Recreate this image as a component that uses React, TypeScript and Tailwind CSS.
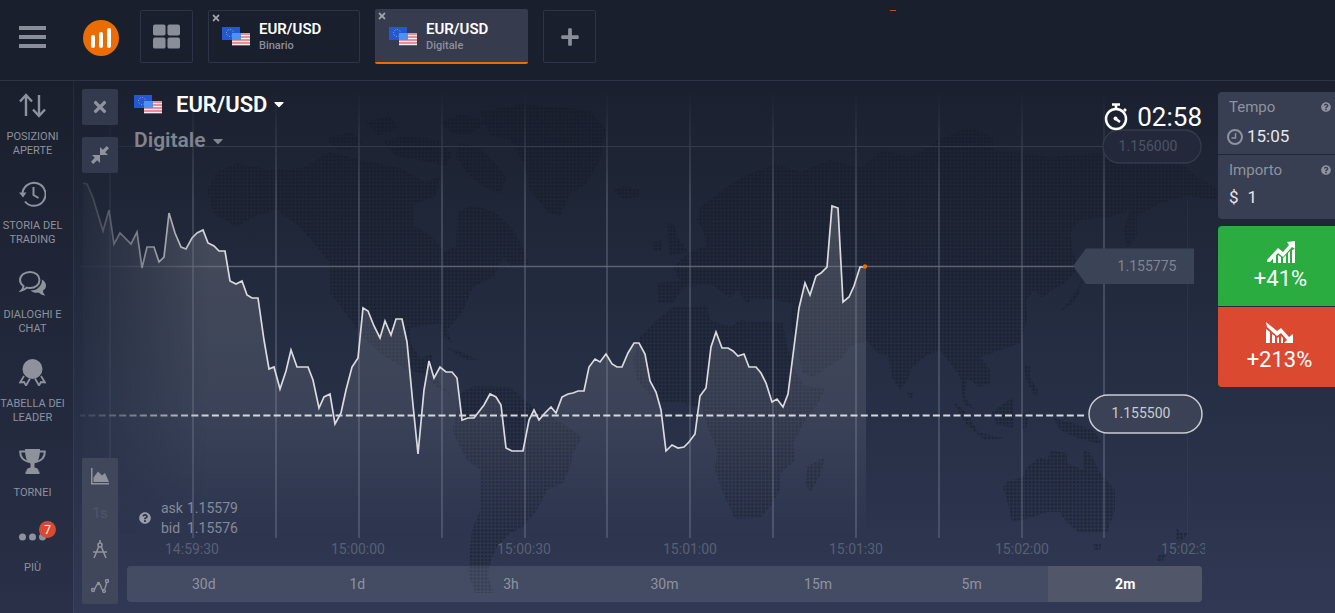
import type { ReactNode } from 'react'
import { FaCaretDown, FaPlus, FaQuestionCircle, FaTimes } from 'react-icons/fa'

const times = ['14:59:30', '15:00:00', '15:00:30', '15:01:00', '15:01:30', '15:02:00', '15:02:30']

const ranges = ['30d', '1d', '3h', '30m', '15m', '5m', '2m']

const gridLines = [109, 192, 275, 358, 441, 524, 606, 689, 772, 855, 938, 1021, 1103]

const price =
  '83,183 87,184 93,198 103,231 109,210 114,244 120,233 131,244 137,232 142,268 147,247 154,247 159,262 164,257 169,213 175,233 181,247 186,249 192,238 197,233 203,230 208,243 214,246 219,251 225,251 230,281 236,284 242,281 247,295 252,298 258,298 264,340 269,369 274,367 280,389 286,371 291,350 297,367 308,367 313,380 319,408 324,397 330,394 335,424 341,413 346,390 352,367 358,358 363,308 368,311 374,326 380,338 385,321 391,335 396,319 402,319 407,342 413,405 418,454 424,390 429,361 434,378 440,367 446,372 452,372 457,378 462,420 468,418 474,418 484,405 490,394 496,397 501,405 506,448 512,451 523,451 529,420 534,410 539,420 545,413 551,407 556,413 562,397 568,394 573,393 578,391 584,391 589,367 595,359 600,362 606,354 612,364 617,367 622,367 628,353 634,343 639,343 645,354 650,381 656,392 661,410 666,451 672,445 678,448 684,447 689,442 695,434 700,396 706,388 711,347 716,332 722,348 728,348 733,351 738,356 744,354 749,367 756,367 761,373 766,383 772,402 777,399 783,407 788,394 799,308 805,283 810,295 816,276 821,273 827,267 832,206 838,208 843,302 849,297 854,286 860,267 865,267'

// Land outlines for the dotted map, one polygon each
const land = [
  // North America
  '207,190 217,172 237,163 270,170 303,168 330,152 360,160 400,168 425,182 440,176 436,196 413,205 414,226 432,236 445,252 456,246 458,212 470,206 484,208 497,214 510,226 522,245 528,264 512,266 503,258 493,277 473,287 462,313 447,330 452,343 443,336 440,323 410,328 410,342 420,358 432,354 432,366 440,384 450,394 440,390 423,374 403,368 380,353 363,337 353,323 330,293 330,263 317,247 300,227 277,210 257,215 237,227 213,213',
  // Arctic islands
  '328,138 350,132 362,142 350,150 334,148',
  '366,122 390,116 398,128 378,136',
  '382,140 410,136 440,140 452,154 446,166 420,160 396,156',
  '440,122 462,114 488,122 470,134 452,134',
  '458,142 480,148 494,162 506,178 500,194 482,186 466,172 456,156',
  // Greenland
  '480,112 520,104 590,110 606,130 600,160 586,184 570,194 560,216 548,212 530,190 525,165 510,140 490,135',
  '613,190 624,186 640,190 638,197 622,199',
  // Caribbean
  '446,347 466,354 478,360 466,360',
  // South America
  '457,396 473,386 510,387 533,407 557,420 582,437 573,453 570,467 563,483 547,490 537,510 523,527 510,533 497,547 490,563 488,576 494,593 475,593 468,573 472,530 480,510 480,470 467,460 453,433 453,427 457,410',
  // British Isles
  '667,223 674,224 678,238 688,252 670,256 668,240',
  '653,242 662,240 662,250 653,252',
  // Africa
  '657,320 673,307 707,305 710,320 730,327 740,320 783,323 787,346 795,370 804,386 825,388 818,404 807,417 793,443 795,461 780,473 780,490 770,507 760,518 735,519 723,493 715,470 717,450 707,425 702,408 680,402 657,402 637,380 633,360 640,337',
  '825,457 820,476 810,493 805,482 808,466',
  // Europe and Asia
  '658,303 657,283 680,281 673,267 690,252 706,246 704,232 697,220 700,207 727,187 745,176 775,164 800,172 830,160 862,168 870,160 883,150 910,157 930,147 937,140 970,127 993,137 993,150 1053,157 1100,153 1177,160 1197,177 1222,191 1216,200 1187,196 1160,203 1137,216 1137,235 1127,250 1123,230 1130,210 1110,217 1080,220 1070,233 1074,256 1078,268 1064,284 1052,290 1042,298 1034,290 1026,300 1027,320 1020,343 980,357 990,370 990,383 980,387 967,378 965,398 975,410 964,404 960,377 950,363 940,350 927,355 912,367 908,380 900,390 892,377 888,355 878,353 867,341 850,346 842,358 813,377 803,373 795,340 790,324 793,304 776,300 753,298 747,304 738,290 729,298 712,284 683,287 673,303',
  '1083,276 1080,292 1072,304 1060,312 1068,302 1078,288',
  // South-east Asia
  '952,400 966,412 978,432 1004,438 984,440 966,424',
  '992,412 1013,397 1014,428 997,425',
  '1024,364 1030,366 1030,378 1038,390 1036,398 1026,380',
  '1022,414 1030,412 1026,428 1022,430',
  '1053,418 1073,423 1093,430 1103,445 1077,438 1060,430',
  '908,392 914,394 912,398 908,397',
  // Australia, Tasmania and New Zealand
  '1003,487 1007,500 1012,522 1030,518 1047,512 1060,512 1067,523 1080,533 1107,532 1115,510 1115,490 1103,477 1097,467 1090,453 1083,450 1083,470 1067,463 1067,453 1050,450 1048,460 1040,457 1027,467 1023,477 1007,482',
  '1093,543 1101,543 1100,550 1094,550',
  '1176,526 1180,533 1189,533 1181,541 1176,540',
  '1156,560 1160,554 1168,553 1162,562',
]

function Flags({ className }: { className: string }) {
  return (
    <svg viewBox="0 0 28 19" className={className} aria-hidden="true">
      <rect width="18" height="13" fill="#2457d6" />
      <circle cx="8" cy="6" r="3.5" fill="none" stroke="#c9b45c" strokeWidth="1" strokeDasharray="1 1.7" />
      <rect x="10" y="6" width="18" height="13" fill="#f4eef2" />
      <path d="M10 7h18M10 10h18M10 13h18M10 16h18M10 18.5h18" stroke="#d6304a" strokeWidth="1.2" />
      <rect x="10" y="6" width="9" height="7" fill="#4c93f0" />
    </svg>
  )
}

function ChartIcon({ down }: { down?: boolean }) {
  return down ? (
    <svg viewBox="0 0 28 22" className="h-[22px] w-7" fill="currentColor" aria-hidden="true">
      <path d="M0 0l11 9 4-3 8 9 4-3v9h-9l3-3-6-7-4 3L1 5z" />
      <path d="M0 7l4 3v11H0zM6 12l3 2v7H6zM11 16l2-1v6h-2zM15 14l2 2v5h-2z" />
    </svg>
  ) : (
    <svg viewBox="0 0 28 22" className="h-[22px] w-7" fill="currentColor" aria-hidden="true">
      <path d="M0 19L11 7l5 4 6-7-2-3 8-1v8l-3-2-9 10-5-4-8 9H0z" />
      <path d="M6 17l3-3v8H6zM11 14l3 2v6h-3zM16 17l3-3v8h-3zM21 12l2-2v12h-2zM25 9l3-1v14h-3z" />
    </svg>
  )
}

function Hamburger() {
  return (
    <button aria-label="Menu" className="mt-[17px] flex w-[27px] flex-col gap-[5px]">
      <span className="h-1 bg-[#8a8e99]" />
      <span className="h-1 bg-[#8a8e99]" />
      <span className="h-1 bg-[#8a8e99]" />
    </button>
  )
}

function AssetTab({ kind, active }: { kind: string; active?: boolean }) {
  return (
    <button
      className={
        active
          ? 'relative flex h-[55px] w-[153px] rounded-xs border-b-2 border-[#ec6c04] bg-[#363b4e] pt-[18px] pl-3.5 text-left'
          : 'relative mt-px flex h-[53px] w-[152px] rounded-xs border border-[#2e3447] pt-4 pl-[13px] text-left'
      }
    >
      <FaTimes className="absolute top-0.5 left-0.5 size-2.5 text-[#a2a5ad]" />
      <Flags className="h-[19px] w-7" />
      <span className="-mt-2 ml-[9px]">
        <span className="block text-[15px] leading-5 font-semibold text-white">EUR/USD</span>
        <span className="block text-[11px] leading-[13px] font-medium text-[#8b8f9b]">{kind}</span>
      </span>
    </button>
  )
}

function NavItem({ label, children }: { label: string; children: ReactNode }) {
  return (
    <a href="#" className="flex flex-col items-center gap-[11px]">
      <span className="relative flex size-[27px] items-center justify-center">{children}</span>
      <span className="text-center text-[11px] leading-3.5 whitespace-pre uppercase">{label}</span>
    </a>
  )
}

function Sidebar() {
  return (
    <nav className="flex w-[73px] shrink-0 flex-col bg-[#191f2c]/30 pt-[11px] pr-2 text-[#8d929d]">
      <div className="flex flex-col items-center gap-[23px]">
        <NavItem label={'Posizioni\naperte'}>
          <svg viewBox="0 0 27 27" className="size-[27px]" fill="none" stroke="currentColor" strokeWidth="2.4">
            <path d="M7 24V4M1 9.5L7 3l6 6.5M20 3v20M14 17.500l6 6.500 6-6.500" />
          </svg>
        </NavItem>
        <NavItem label={'Storia del\ntrading'}>
          <svg viewBox="0 0 27 27" className="size-[27px]" fill="none" stroke="currentColor" strokeWidth="2">
            <path d="M3.500 13.500a11.500 11.500 0 1 1 2.500 7" />
            <path d="M14.500 6v8l5 3" />
            <path d="M0 11.500h7.500L4 16.500z" fill="currentColor" stroke="none" />
          </svg>
        </NavItem>
        <NavItem label={'Dialoghi e\nchat'}>
          <svg viewBox="0 0 27 27" className="size-[27px]" fill="none" stroke="currentColor" strokeWidth="2">
            <path d="M11 2c5.500 0 9.500 3.500 9.500 8s-4 8-9.500 8c-1 0-2-.1-3-.4C6.500 19 5 20 2.500 20.500 4 19 4.500 17.500 4.500 16 2.500 14.500 1 12.500 1 10c0-4.500 4.500-8 10-8z" />
            <path
              d="M23 9.500c2.500 1.500 4 3.500 4 6 0 2-1 4-3 5 0 2 .5 3.500 2.500 5-3 0-5-1.500-6.500-2.800-3.500.5-6.500-.3-8.500-2.200 6.500.3 11.500-4.500 11.500-11z"
              fill="currentColor"
              stroke="none"
            />
          </svg>
        </NavItem>
        <NavItem label={'Tabella dei\nleader'}>
          <svg viewBox="0 0 27 27" className="size-[27px]" fill="none" stroke="currentColor" strokeWidth="1.800">
            <circle cx="13.500" cy="10" r="10" fill="currentColor" stroke="none" />
            <path d="M5 17l-4 6.500 4-.5 2 3.500 4-7M22 17l4 6.500-4-.5-2 3.500-4-7" />
          </svg>
        </NavItem>
        <NavItem label="Tornei">
          <svg viewBox="0 0 27 27" className="size-[27px]" fill="currentColor">
            <path d="M6 1h15c0 8-1.500 12.500-5.500 14.500v4c3 .5 4 1.500 4 3v1h1V26h-14v-2.500h1v-1c0-1.500 1-2.500 4-3v-4C7.500 13.500 6 9 6 1z" />
            <path d="M7 3.500H1.200C1 9 4 12.500 10 14M20 3.500h5.800C26 9 23 12.500 17 14" fill="none" stroke="currentColor" strokeWidth="2" />
          </svg>
        </NavItem>
        <NavItem label="Più">
          <svg viewBox="0 0 27 8" className="h-2 w-[27px]" fill="currentColor">
            <circle cx="3.500" cy="4" r="3.500" />
            <circle cx="13.500" cy="4" r="3.500" />
            <circle cx="23.500" cy="4" r="3.500" />
          </svg>
          <span className="absolute -top-0.5 left-5 flex size-[17px] items-center justify-center rounded-full bg-[#db4931] text-xs leading-none text-white">
            7
          </span>
        </NavItem>
      </div>
    </nav>
  )
}

function PriceChart() {
  return (
    <svg
      viewBox="74 81 1144 532"
      preserveAspectRatio="xMidYMid slice"
      className="absolute inset-0 size-full"
      fontSize="14"
      aria-label="EUR/USD price"
    >
      <defs>
        <pattern id="dots" width="3.7" height="3.7" patternUnits="userSpaceOnUse">
          <rect width="2.600" height="2.600" rx="0.6" fill="#131824" />
        </pattern>
        <linearGradient id="grid" gradientUnits="userSpaceOnUse" x1="0" y1="90" x2="0" y2="200">
          <stop offset="0" stopColor="#8f96a8" stopOpacity="0" />
          <stop offset="1" stopColor="#8f96a8" stopOpacity="0.3" />
        </linearGradient>
        <linearGradient id="area" gradientUnits="userSpaceOnUse" x1="0" y1="206" x2="0" y2="538">
          <stop offset="0" stopColor="#b4b9be" stopOpacity="0.26" />
          <stop offset="0.6" stopColor="#a4a8b4" stopOpacity="0.17" />
          <stop offset="1" stopColor="#9aa0b4" stopOpacity="0" />
        </linearGradient>
        <linearGradient id="fade" gradientUnits="userSpaceOnUse" x1="80" y1="0" x2="210" y2="0">
          <stop offset="0" stopColor="#fff" stopOpacity="0.1" />
          <stop offset="1" stopColor="#fff" />
        </linearGradient>
        <mask id="left" maskUnits="userSpaceOnUse" x="73" y="81" width="1144" height="532">
          <rect x="80" y="81" width="1137" height="532" fill="url(#fade)" />
        </mask>
        <clipPath id="plot">
          <rect x="73" y="81" width="1132" height="532" />
        </clipPath>
      </defs>

      <g fill="url(#dots)" opacity="0.5">
        {land.map((points) => (
          <polygon key={points} points={points} />
        ))}
      </g>

      <g mask="url(#left)">
        <polygon points={`83,538 ${price} 866,267 866,538`} fill="url(#area)" />
        {gridLines.map((x) => (
          <rect key={x} x={x} y="90" width="2" height="448" fill="url(#grid)" />
        ))}
        <path d="M1187.500 200V538" stroke="#8f96a8" strokeOpacity="0.07" />
        <path d="M80 146.500H1103" stroke="#343b50" />
        <path d="M80 266.500H1074" stroke="#6b7180" strokeOpacity="0.8" strokeWidth="1.500" />
        <path d="M78 415.500H1086" stroke="#d5d7db" strokeWidth="2" strokeDasharray="7 3.300" />
        <polyline points={price} fill="none" stroke="#d9dbdf" strokeWidth="1.700" />
      </g>
      <circle cx="865" cy="266.500" r="2.200" fill="#ec6c04" />

      <rect x="1103" y="130" width="98" height="33" rx="16.500" fill="#23293b" stroke="#353b4d" strokeWidth="1.300" />
      <text x="1148" y="151" textAnchor="middle" fill="#4d5365">
        1.156000
      </text>
      <path d="M1073 266l13-17.500h108v35.500h-108z" fill="#3b4356" />
      <text x="1147" y="271" textAnchor="middle" fill="#80858f">
        1.155775
      </text>
      <rect x="1089" y="395" width="113" height="38" rx="19" fill="#3b4255" stroke="#c9ccd2" strokeWidth="1.500" />
      <text x="1141" y="418" textAnchor="middle" fill="#c9ccd2">
        1.155500
      </text>

      <g clipPath="url(#plot)" fill="#586073" textAnchor="middle">
        {times.map((t, i) => (
          <text key={t} x={192 + i * 166} y="554">
            {t}
          </text>
        ))}
      </g>
    </svg>
  )
}

function ChartTools() {
  return (
    <div className="flex w-9 flex-col text-[#8f939e]">
      <button aria-label="Chiudi" className="flex size-9 items-center justify-center rounded-xs bg-[#343a4d]">
        <FaTimes className="size-[18px]" />
      </button>
      <button aria-label="Riduci" className="mt-3 flex size-9 items-center justify-center rounded-xs bg-[#343a4d]">
        <svg viewBox="0 0 18 18" className="size-[18px]" fill="currentColor">
          <path d="M9 1v8h8l-2.800-2.800L18 2.200 15.800 0l-4 3.800zM9 17V9H1l2.800 2.800L0 15.800 2.200 18l4-3.800z" />
        </svg>
      </button>
      <div className="mt-auto grid h-[146px] grid-rows-4 rounded-xs bg-[#41475b]">
        <button aria-label="Tipo di grafico" className="flex items-center justify-center">
          <svg viewBox="0 0 18 17" className="h-[17px] w-[18px]" fill="currentColor">
            <path d="M0 0h1.500v15H18v1.500H0z" />
            <path d="M2.500 14V9.500L7 3.500l4 4 3-2.500 4 9z" />
          </svg>
        </button>
        <button className="text-sm text-[#50566a]">1s</button>
        <button aria-label="Strumenti" className="flex items-center justify-center">
          <svg viewBox="0 0 16 20" className="h-5 w-4" fill="none" stroke="currentColor" strokeWidth="1.600">
            <path d="M8 1v3M7 7L2 19M9 7l5 12M1 13h14" />
            <circle cx="8" cy="6" r="2" />
          </svg>
        </button>
        <button aria-label="Indicatori" className="flex items-center justify-center">
          <svg viewBox="0 0 18 14" className="h-3.5 w-[18px]" fill="none" stroke="currentColor" strokeWidth="1.400">
            <path d="M3.500 10.500C5 8 5 5.500 7.500 4.500c2 .5 2.500 2.500 3 5 .5 1 1 1.500 2 1.500 2-1 2.500-4 3-7.500" />
            <circle cx="2" cy="11" r="1.500" />
            <circle cx="7.500" cy="4.500" r="1" fill="currentColor" />
            <circle cx="13" cy="12" r="1.400" />
            <circle cx="16" cy="2" r="1.500" />
          </svg>
        </button>
      </div>
    </div>
  )
}

function Quotes() {
  return (
    <div className="mt-auto ml-3 flex items-center gap-2.5 text-sm leading-5 text-[#858a97]">
      <FaQuestionCircle className="size-3 text-[#9a9eaa]" />
      <dl className="grid grid-cols-[26px_auto]">
        <dt>ask</dt>
        <dd>1.15579</dd>
        <dt>bid</dt>
        <dd>1.15576</dd>
      </dl>
    </div>
  )
}

function Chart() {
  return (
    <section className="relative flex min-w-0 flex-1 border-l border-white/5">
      <PriceChart />
      <div className="relative flex flex-1 gap-[9px] pt-2 pr-4 pb-[9px] pl-2">
        <ChartTools />
        <div className="flex min-w-0 flex-1 flex-col">
          <div className="flex items-start justify-between pl-[7px]">
            <div>
              <button className="flex h-[30px] items-center text-[22px] font-semibold text-white">
                <Flags className="mr-3.5 h-[19px] w-7" />
                EUR/USD
                <FaCaretDown className="ml-1 size-4" />
              </button>
              <button className="mt-[7px] flex h-[30px] items-center text-[21px] font-semibold text-[#80848f]">
                Digitale
                <FaCaretDown className="ml-1 size-4" />
              </button>
            </div>
            <div className="mt-2.5 flex items-center gap-2 text-[26px] leading-9 text-white">
              <svg viewBox="0 0 25 28" className="h-7 w-[25px]" fill="none" stroke="currentColor" strokeWidth="2.500">
                <circle cx="12" cy="16" r="10" />
                <path d="M8 1.500h8M12 1v5M20 6l2 2M12 16l4 3" strokeWidth="2.600" />
                <circle cx="11.500" cy="15.500" r="2" fill="currentColor" stroke="none" />
              </svg>
              02:58
            </div>
          </div>
          <Quotes />
          <div className="mt-7 mb-0.5 grid h-9 grid-cols-7 overflow-hidden rounded-sm bg-[#9ba0b0]/20 text-sm text-[#8f939f]">
            {ranges.map((r) => (
              <button key={r} className={r === '2m' ? 'bg-[#515669] font-bold text-white' : ''}>
                {r}
              </button>
            ))}
          </div>
        </div>
      </div>
    </section>
  )
}

function OrderPanel() {
  return (
    <aside className="w-[117px] shrink-0 pt-[11px] text-[#8f939e]">
      <div className="overflow-hidden rounded-l-sm bg-[#383f52]">
        <div className="h-[63px] border-b border-[#202638] pt-[5px] pl-[11px]">
          <div className="flex h-5 items-center justify-between pr-1 text-[15px]">
            Tempo
            <FaQuestionCircle className="size-2.5" />
          </div>
          <button className="mt-2 flex h-6 items-center gap-1 text-[17px] text-[#e6e7ea]">
            <svg viewBox="0 0 16 16" className="-ml-0.5 size-4 text-[#8f939e]" fill="none" stroke="currentColor" strokeWidth="2">
              <circle cx="8" cy="8" r="7" />
              <path d="M8.500 4v5H4.500" strokeWidth="1.500" />
            </svg>
            15:05
          </button>
        </div>
        <div className="h-16 pt-[5px] pl-[11px]">
          <div className="flex h-5 items-center justify-between pr-1 text-[15px]">
            <label htmlFor="amount">Importo</label>
            <FaQuestionCircle className="size-2.5" />
          </div>
          <div className="mt-1.5 flex h-6 items-center gap-[9px] text-[17px] text-[#e6e7ea]">
            <span>$</span>
            <input id="amount" defaultValue="1" className="w-16 bg-transparent outline-none" />
          </div>
        </div>
      </div>
      <button className="mt-[7px] flex h-20 w-full flex-col items-center justify-center gap-0.5 rounded-tl-sm bg-[#2aac40] pt-0.5 pl-2 text-[22px] leading-7 text-white">
        <ChartIcon />
        +41%
      </button>
      <button className="mt-px flex h-20 w-full flex-col items-center justify-center gap-0.5 rounded-bl-sm bg-[#db4931] pt-0.5 pl-1.5 text-[22px] leading-7 text-white">
        <ChartIcon down />
        +213%
      </button>
    </aside>
  )
}

export default function App() {
  return (
    <div className="flex min-h-screen flex-col overflow-x-hidden bg-[#191f2c] font-['Roboto',sans-serif]">
      <header className="flex h-[81px] items-start border-b border-[#2d3345] pt-[9px] pl-[19px]">
        <Hamburger />
        <svg viewBox="0 0 36 36" className="mt-[11px] ml-[37px] size-9" aria-label="Home">
          <circle cx="18" cy="18" r="18" fill="#ec6c04" />
          <path d="M10 17v9M18 14v12M26 10v16" stroke="#fff" strokeWidth="4" strokeLinecap="round" />
        </svg>
        <button
          aria-label="Griglia"
          className="mt-px ml-[21px] flex h-[53px] w-[53px] items-center justify-center rounded-xs border border-[#2e3447]"
        >
          <svg viewBox="0 0 28 25" className="h-[25px] w-[27px]" fill="#8a8e99">
            <rect width="13" height="11.500" rx="2" />
            <rect x="15" width="13" height="11.500" rx="2" />
            <rect y="13.500" width="13" height="11.500" rx="2" />
            <rect x="15" y="13.500" width="13" height="11.500" rx="2" />
          </svg>
        </button>
        <div className="ml-[15px] flex items-start gap-[15px]">
          <AssetTab kind="Binario" />
          <AssetTab kind="Digitale" active />
        </div>
        <button
          aria-label="Aggiungi"
          className="mt-px ml-[15px] flex h-[53px] w-[53px] items-center justify-center rounded-xs border border-[#2e3447] text-[#8a8e99]"
        >
          <FaPlus className="size-5" />
        </button>
        <span className="mt-px ml-[294px] h-px w-1.5 bg-[#c8472f]" />
      </header>
      <div className="flex flex-1 bg-linear-to-b from-[#1a202e] via-[#252d42] to-[#303854]">
        <Sidebar />
        <Chart />
        <OrderPanel />
      </div>
    </div>
  )
}
